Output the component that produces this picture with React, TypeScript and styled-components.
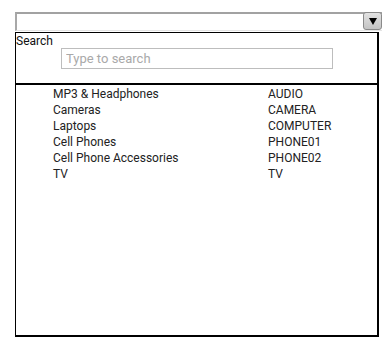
import React from "react";
import styled, { createGlobalStyle } from "styled-components";

const GlobalStyle = createGlobalStyle`
  html, body {
    margin: 0;
    padding: 0;
    background: #fff;
  }
  body {
    font-family: Roboto, "Liberation Sans", Arial, sans-serif;
    color: #222;
  }
`;

const Page = styled.div`
  padding: 12px 0 0 15px;
`;

const Combo = styled.div`
  box-sizing: border-box;
  width: 367px;
  height: 19px;
  display: flex;
  justify-content: flex-end;
  align-items: center;
  border-top: 2px solid #a2a2a2;
  border-left: 2px solid #a8a8a8;
  border-bottom: 1px solid #e4e4e4;
  background: #fff;
`;

const DropButton = styled.div`
  box-sizing: border-box;
  width: 19px;
  height: 18px;
  margin-top: -2px;
  display: flex;
  align-items: center;
  justify-content: center;
  border: 1px solid #8a8a8a;
  border-radius: 3px;
  background: linear-gradient(#e2e2e2, #c4c4c4);
`;

const Panel = styled.div`
  box-sizing: border-box;
  width: 364px;
  height: 305px;
  margin-top: 1px;
  border-top: 1px solid #000;
  border-left: 1px solid #000;
  border-right: 2px solid #000;
  border-bottom: 2px solid #000;
  display: flex;
  flex-direction: column;
`;

const SearchSection = styled.div`
  padding-top: 1px;
  display: flex;
  flex-direction: column;
  border-bottom: 2px solid #000;
`;

const Label = styled.div`
  font-size: 12px;
  line-height: 14px;
  color: #111;
`;

const SearchInput = styled.input`
  box-sizing: border-box;
  width: 272px;
  height: 21px;
  margin: 0 0 14px 45px;
  padding: 0 4px;
  border: 1px solid #bdbdbd;
  font-family: Roboto, "Liberation Sans", Arial, sans-serif;
  font-size: 13px;
  color: #222;
  outline: none;
  &::placeholder {
    color: #a9a9a9;
  }
`;

const List = styled.div`
  padding-top: 1px;
  display: flex;
  flex-direction: column;
`;

const Row = styled.div`
  display: grid;
  grid-template-columns: 215px 1fr;
  padding-left: 37px;
  font-size: 12px;
  line-height: 16px;
  color: #222;
`;

const items = [
  { name: "MP3 & Headphones", code: "AUDIO" },
  { name: "Cameras", code: "CAMERA" },
  { name: "Laptops", code: "COMPUTER" },
  { name: "Cell Phones", code: "PHONE01" },
  { name: "Cell Phone Accessories", code: "PHONE02" },
  { name: "TV", code: "TV" },
];

const App = () => {
  return (
    <Page>
      <GlobalStyle />
      <Combo>
        <DropButton>
          <svg width="8" height="7" viewBox="0 0 8 7">
            <path d="M0 0 H8 L4 7 Z" fill="#000" />
          </svg>
        </DropButton>
      </Combo>
      <Panel>
        <SearchSection>
          <Label>Search</Label>
          <SearchInput placeholder="Type to search" />
        </SearchSection>
        <List>
          {items.map((item) => (
            <Row key={item.code}>
              <span>{item.name}</span>
              <span>{item.code}</span>
            </Row>
          ))}
        </List>
      </Panel>
    </Page>
  );
};

export default App;
